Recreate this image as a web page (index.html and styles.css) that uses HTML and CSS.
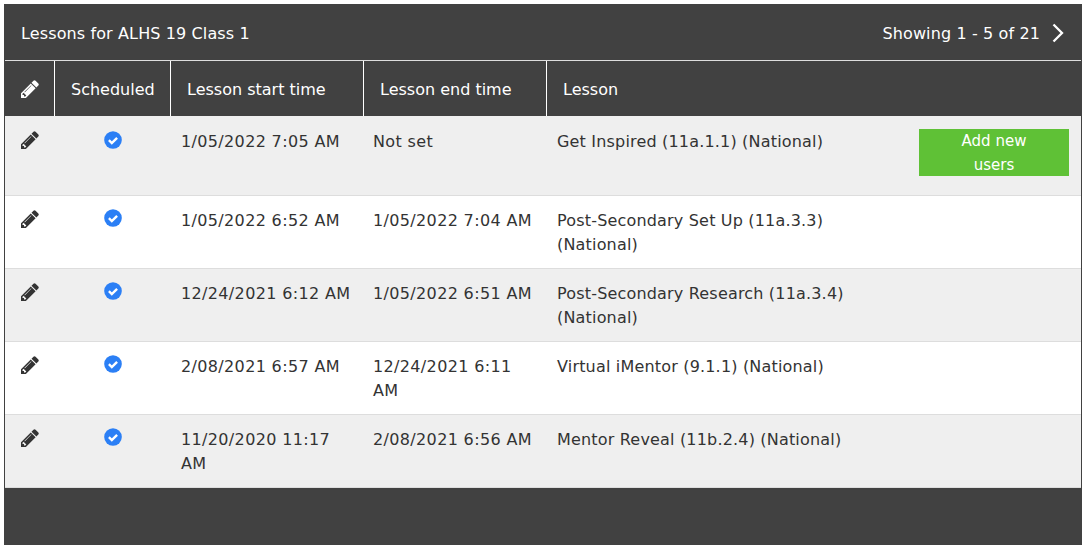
FILE: index.html
```html
<!DOCTYPE html>
<html lang="en">
<head>
<meta charset="utf-8">
<title>Lessons</title>
<link rel="stylesheet" href="styles.css">
</head>
<body>
<svg class="defs" width="0" height="0" aria-hidden="true">
  <symbol id="pencil" viewBox="128 128 1536 1536">
    <path d="M491 1536l91-91-235-235-91 91v107h128v128h107zm523-928q0-22-22-22-10 0-17 7l-542 542q-7 7-7 17 0 22 22 22 10 0 17-7l542-542q7-7 7-17zm-54-192l416 416-832 832h-416v-416zm683 96q0 53-37 90l-166 166-416-416 166-165q36-38 90-38 53 0 91 38l235 234q37 39 37 91z"/>
  </symbol>
  <symbol id="check" viewBox="0 0 18 18">
    <circle cx="9" cy="9" r="8.800" fill="#2b7ff5"/>
    <path d="M4.900 9.200l2.900 2.900 5.300-5.300" fill="none" stroke="#fff" stroke-width="2.400"/>
  </symbol>
</svg>
<main class="panel">
  <header class="topbar">
    <span class="title">Lessons for ALHS 19 Class 1</span>
    <span class="pager">Showing 1 - 5 of 21
      <svg class="chevron" viewBox="0 0 12 20"><path d="M1.500 1.500L10 10l-8.500 8.500" fill="none" stroke="#fff" stroke-width="2.300"/></svg>
    </span>
  </header>
  <div class="head">
    <div class="hcell hicon"><svg class="pencil pencil-light"><use href="#pencil"/></svg></div>
    <div class="hcell">Scheduled</div>
    <div class="hcell">Lesson start time</div>
    <div class="hcell">Lesson end time</div>
    <div class="hcell hlast">Lesson</div>
  </div>
  <div class="row alt first">
    <div class="edit"><svg class="pencil"><use href="#pencil"/></svg></div>
    <div class="sched"><svg class="tick"><use href="#check"/></svg></div>
    <div class="cell date">1/05/2022 7:05 AM</div>
    <div class="cell date">Not set</div>
    <div class="cell lesson">Get Inspired (11a.1.1) (National)</div>
    <div class="action"><button class="add" type="button">Add new users</button></div>
  </div>
  <div class="row">
    <div class="edit"><svg class="pencil"><use href="#pencil"/></svg></div>
    <div class="sched"><svg class="tick"><use href="#check"/></svg></div>
    <div class="cell date">1/05/2022 6:52 AM</div>
    <div class="cell date">1/05/2022 7:04 AM</div>
    <div class="cell lesson">Post-Secondary Set Up (11a.3.3) (National)</div>
    <div class="action"></div>
  </div>
  <div class="row alt">
    <div class="edit"><svg class="pencil"><use href="#pencil"/></svg></div>
    <div class="sched"><svg class="tick"><use href="#check"/></svg></div>
    <div class="cell date">12/24/2021 6:12 AM</div>
    <div class="cell date">1/05/2022 6:51 AM</div>
    <div class="cell lesson">Post-Secondary Research (11a.3.4) (National)</div>
    <div class="action"></div>
  </div>
  <div class="row">
    <div class="edit"><svg class="pencil"><use href="#pencil"/></svg></div>
    <div class="sched"><svg class="tick"><use href="#check"/></svg></div>
    <div class="cell date">2/08/2021 6:57 AM</div>
    <div class="cell date">12/24/2021 6:11 AM</div>
    <div class="cell lesson">Virtual iMentor (9.1.1) (National)</div>
    <div class="action"></div>
  </div>
  <div class="row alt">
    <div class="edit"><svg class="pencil"><use href="#pencil"/></svg></div>
    <div class="sched"><svg class="tick"><use href="#check"/></svg></div>
    <div class="cell date">11/20/2020 11:17 AM</div>
    <div class="cell date">2/08/2021 6:56 AM</div>
    <div class="cell lesson">Mentor Reveal (11b.2.4) (National)</div>
    <div class="action"></div>
  </div>
  <div class="foot"></div>
</main>
</body>
</html>
```
FILE: styles.css
```css
* { box-sizing: border-box; }
html, body { margin: 0; background: #fff; }
body { padding: 4px; font-family: "DejaVu Sans", sans-serif; font-size: 16px; line-height: 24px; color: #333; }
.defs { position: absolute; }
.panel { width: 1078px; background: #414141; border-left: 1px solid #414141; border-right: 1px solid #414141; }
.topbar { height: 56px; display: flex; justify-content: space-between; align-items: center; padding: 3px 17px 0 16px; color: #fff; letter-spacing: .12px; }
.pager { display: flex; align-items: center; gap: 12px; letter-spacing: .12px; }
.chevron { width: 12px; height: 20px; margin-top: -1px; }
.head { height: 56px; display: grid; grid-template-columns: 50px 116px 193px 183px 1fr; border-top: 1px solid #ddd; color: #fff; }
.hcell { display: flex; align-items: center; padding: 2px 0 0 16px; border-right: 1px solid #fff; }
.hicon { padding-top: 0; }
.hlast { border-right: 0; }
.row { display: grid; grid-template-columns: 50px 116px 192px 184px 320px 1fr; background: #fff; border-bottom: 1px solid #ddd; min-height: 73px; color: #333; }
.alt { background: #efefef; }
.first { min-height: 80px; }
.edit { padding: 14px 0 0 16px; }
.sched { padding-top: 13px; display: flex; justify-content: center; align-items: flex-start; }
.cell { padding: 13px 10px 0; }
.date { letter-spacing: .35px; }
.lesson { letter-spacing: .18px; }
.first .edit, .first .sched { padding-top: 15px; }
.first .cell { padding-top: 14px; }
.action { padding: 13px 12px 0 0; display: flex; justify-content: flex-end; align-items: flex-start; }
.pencil { display: block; width: 18px; height: 18px; fill: #333; }
.pencil-light { fill: #fff; }
.tick { display: block; width: 18px; height: 18px; }
.add { width: 150px; height: 47px; padding: 1px 30px 0; border: 0; background: #5fc136; color: #fff; font: 15px/23.5px "DejaVu Sans", sans-serif; }
.foot { height: 57px; }
```
